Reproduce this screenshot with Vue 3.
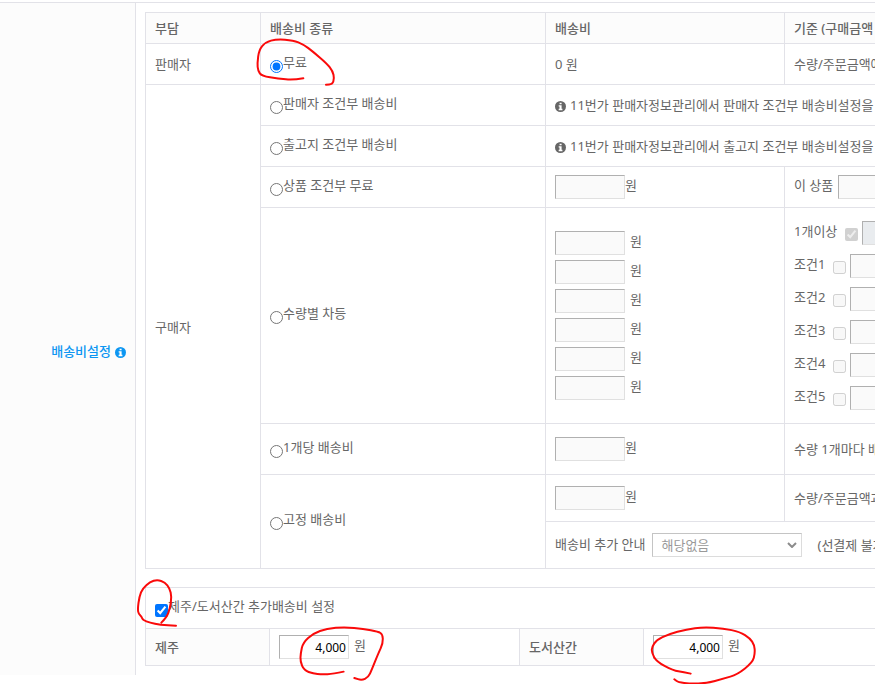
<script setup>
import { ref } from 'vue'

const feeType = ref('free')
const remoteEnabled = ref(true)
const jejuFee = ref('4,000')
const islandFee = ref('4,000')
const conditions = ['조건1', '조건2', '조건3', '조건4', '조건5']

// Hand-drawn marks, stored in a 3x grid from their own origin.
const marks = [
  { x: 250, y: 0, points: [[160, 235], [130, 240], [85, 236], [35, 228], [24, 212], [22, 190], [27, 150], [46, 127], [80, 117], [130, 121], [160, 133], [190, 156], [230, 190], [248, 213], [253, 236], [247, 253], [228, 254]] },
  { x: 100, y: 480, points: [[184, 428], [200, 412], [210, 385], [215, 350], [209, 325], [195, 307], [172, 299], [150, 306], [128, 325], [118, 350], [113, 388], [116, 402], [125, 410], [128, 420], [150, 428], [180, 435], [228, 437]] },
  { x: 100, y: 480, points: [[731, 575], [700, 582], [665, 583], [640, 581], [612, 571], [601, 545], [602, 520], [609, 488], [640, 460], [680, 446], [735, 441], [790, 447], [835, 455], [848, 463], [849, 490], [835, 520], [815, 570], [805, 592], [785, 601], [763, 594]] },
  { x: 540, y: 420, points: [[452, 761], [430, 756], [400, 752], [350, 725], [335, 698], [336, 680], [350, 660], [385, 643], [440, 628], [490, 621], [550, 625], [600, 636], [630, 655], [643, 675], [645, 700], [638, 727], [592, 764], [550, 776], [500, 790], [450, 791], [415, 787], [403, 778]] }
]

function smooth(points) {
  let d = `M${points[0].join(' ')}`
  for (let i = 1; i < points.length - 1; i++) {
    const [x, y] = points[i]
    const [nx, ny] = points[i + 1]
    d += ` Q${x} ${y} ${(x + nx) / 2} ${(y + ny) / 2}`
  }
  return `${d} L${points[points.length - 1].join(' ')}`
}
</script>

<template>
  <div class="page">
    <div class="row">
      <aside class="side">
        <a class="side-link" href="#shipping">배송비설정
          <svg class="info" viewBox="0 0 12 12" aria-hidden="true">
            <circle cx="6" cy="6" r="6" fill="currentColor" />
            <path d="M5 1.8h2.2v1.8H5zM4 4.7h3.2v3.8h.9V10H4V8.500h.9V6.100H4z" fill="#fff" />
          </svg>
        </a>
      </aside>

      <main id="shipping" class="content">
        <table class="grid fees">
          <colgroup>
            <col class="c-payer"><col class="c-type"><col class="c-fee"><col>
          </colgroup>
          <thead>
            <tr class="head">
              <th>부담</th>
              <th>배송비 종류</th>
              <th>배송비</th>
              <th>기준 (구매금액</th>
            </tr>
          </thead>
          <tbody>
            <tr class="line">
              <td>판매자</td>
              <td><label class="choice"><input v-model="feeType" type="radio" name="fee" value="free"><span>무료</span></label></td>
              <td>0 원</td>
              <td>수량/주문금액에</td>
            </tr>
            <tr class="line">
              <td rowspan="6">구매자</td>
              <td><label class="choice"><input v-model="feeType" type="radio" name="fee" value="seller"><span>판매자 조건부 배송비</span></label></td>
              <td colspan="2">
                <p class="note">
                  <svg class="info" viewBox="0 0 12 12" aria-hidden="true">
                    <circle cx="6" cy="6" r="6" fill="currentColor" />
                    <path d="M5 1.8h2.2v1.8H5zM4 4.7h3.2v3.8h.9V10H4V8.500h.9V6.100H4z" fill="#fff" />
                  </svg>
                  <span>11번가 판매자정보관리에서 판매자 조건부 배송비설정을</span>
                </p>
              </td>
            </tr>
            <tr class="line">
              <td><label class="choice"><input v-model="feeType" type="radio" name="fee" value="origin"><span>출고지 조건부 배송비</span></label></td>
              <td colspan="2">
                <p class="note">
                  <svg class="info" viewBox="0 0 12 12" aria-hidden="true">
                    <circle cx="6" cy="6" r="6" fill="currentColor" />
                    <path d="M5 1.8h2.2v1.8H5zM4 4.7h3.2v3.8h.9V10H4V8.500h.9V6.100H4z" fill="#fff" />
                  </svg>
                  <span>11번가 판매자정보관리에서 출고지 조건부 배송비설정을</span>
                </p>
              </td>
            </tr>
            <tr class="line">
              <td><label class="choice"><input v-model="feeType" type="radio" name="fee" value="product"><span>상품 조건부 무료</span></label></td>
              <td><label class="amount tight"><input class="box" type="text" disabled><span>원</span></label></td>
              <td><label class="amount"><span>이 상품</span><input class="box" type="text" disabled></label></td>
            </tr>
            <tr class="tiers">
              <td><label class="choice"><input v-model="feeType" type="radio" name="fee" value="tier"><span>수량별 차등</span></label></td>
              <td>
                <div class="tier-fees">
                  <label v-for="n in 6" :key="n" class="amount"><input class="box" type="text" disabled><span>원</span></label>
                </div>
              </td>
              <td>
                <div class="tier-rules">
                  <div class="rule">
                    <label class="rule-label"><span>1개이상</span><input type="checkbox" checked disabled></label>
                    <input class="box fixed" type="text" disabled>
                  </div>
                  <div v-for="c in conditions" :key="c" class="rule">
                    <label class="rule-label"><span>{{ c }}</span><input type="checkbox" disabled></label>
                    <input class="box" type="text" disabled>
                  </div>
                </div>
              </td>
            </tr>
            <tr class="unit">
              <td><label class="choice"><input v-model="feeType" type="radio" name="fee" value="unit"><span>1개당 배송비</span></label></td>
              <td><label class="amount tight"><input class="box" type="text" disabled><span>원</span></label></td>
              <td>수량 1개마다 배</td>
            </tr>
            <tr>
              <td>
                <label class="choice"><input v-model="feeType" type="radio" name="fee" value="flat"><span>고정 배송비</span></label>
              </td>
              <td colspan="2" class="nested">
                <div class="flat">
                  <div class="flat-fee"><label class="amount tight"><input class="box" type="text" disabled><span>원</span></label></div>
                  <div class="flat-rule">수량/주문금액과</div>
                </div>
                <div class="extra">
                  <label class="extra-label" for="extra-info">배송비 추가 안내</label>
                  <span class="select">
                    <select id="extra-info" disabled><option>해당없음</option></select>
                    <svg viewBox="0 0 10 6" aria-hidden="true"><path d="M1 1l4 4 4-4" fill="none" stroke="#8c8c8c" stroke-width="2" /></svg>
                  </span>
                  <span class="prepaid">(선결제 불가</span>
                </div>
              </td>
            </tr>
          </tbody>
        </table>

        <table class="grid remote">
          <colgroup>
            <col class="c-area"><col class="c-price"><col class="c-area"><col>
          </colgroup>
          <tbody>
            <tr class="line">
              <td colspan="4"><label class="choice"><input v-model="remoteEnabled" type="checkbox"><span>제주/도서산간 추가배송비 설정</span></label></td>
            </tr>
            <tr class="areas">
              <th><label for="jeju">제주</label></th>
              <td><div class="amount"><input id="jeju" v-model="jejuFee" class="box" type="text"><span>원</span></div></td>
              <th><label for="island">도서산간</label></th>
              <td><div class="amount"><input id="island" v-model="islandFee" class="box" type="text"><span>원</span></div></td>
            </tr>
          </tbody>
        </table>
      </main>
    </div>

    <svg class="marks" width="875" height="684" viewBox="0 0 875 684" aria-hidden="true">
      <g v-for="(m, i) in marks" :key="i" :transform="`translate(${m.x} ${m.y}) scale(0.3333)`">
        <path :d="smooth(m.points)" />
      </g>
    </svg>
  </div>
</template>

<style>
body {
  background: #fff;
  overflow: hidden;
}
</style>

<style scoped>
.page {
  position: relative;
  overflow: hidden;
  padding: 2px 0 9px;
  color: #666;
  font: 13px/20px "Noto Sans", "Noto Sans CJK KR", sans-serif;
}
.row {
  display: flex;
  border-top: 1px solid #e2e2e8;
}
.side {
  box-sizing: border-box;
  flex: 0 0 136px;
  padding: 338px 9px 0 0;
  border-right: 1px solid #e2e2e8;
  background: #fcfcfc;
}
.side-link {
  display: flex;
  align-items: center;
  justify-content: flex-end;
  gap: 4px;
  color: #0c96f2;
  font-weight: 500;
  text-decoration: none;
  white-space: nowrap;
}
.info {
  flex: none;
  width: 11px;
  height: 11px;
  margin-top: 3px;
}
.content {
  flex: 1;
  min-width: 0;
  padding: 9px 0 9px 9px;
}
.grid {
  width: calc(100% + 100px);
  border-collapse: collapse;
  table-layout: fixed;
}
.remote {
  margin-top: 18px;
}
.c-payer { width: 115px; }
.c-type { width: 285px; }
.c-fee { width: 239px; }
.c-area { width: 124px; }
.c-price { width: 250px; }
th,
td {
  padding: 0 9px;
  border: 1px solid #e2e2e8;
  text-align: left;
  vertical-align: middle;
  white-space: nowrap;
}
th {
  background: #fcfcfc;
  font-weight: 500;
}
.head th { height: 30px; }
.line td { height: 40px; }
.tiers td { height: 215px; }
.unit td { height: 50px; }
.areas th,
.areas td { height: 36px; }
.choice {
  display: flex;
  align-items: flex-start;
  padding-bottom: 3px;
  line-height: 18px;
}
.choice input {
  width: 13px;
  height: 13px;
  margin: 7px 0 0;
}
.note {
  display: flex;
  align-items: center;
  gap: 4px;
  margin: 0;
}
.amount {
  display: flex;
  align-items: flex-start;
  gap: 5px;
}
.tight { gap: 0; }
.box {
  box-sizing: border-box;
  flex: none;
  width: 70px;
  height: 24px;
  margin: 0;
  padding: 1px 2px;
  border: 1px solid;
  border-color: #b0b0b0 #e0e0e0 #e0e0e0 #b0b0b0;
  border-radius: 0;
  background: #fff;
  color: #000;
  font: 12px "Noto Sans", "Noto Sans CJK KR", sans-serif;
  text-align: right;
}
.box:disabled { background: #fafafa; }
.box.fixed:disabled { background: #e9ecef; }
.tier-fees {
  display: grid;
  gap: 5px;
}
.tier-rules {
  display: grid;
  gap: 9px;
}
.rule {
  display: flex;
  gap: 4px;
}
.rule-label {
  display: flex;
  align-items: flex-start;
  gap: 8px;
}
.rule-label input {
  width: 13px;
  height: 13px;
  margin: 7px 0 0;
}
.nested { padding: 0; }
.flat {
  display: flex;
  border-bottom: 1px solid #e2e2e8;
}
.flat-fee,
.flat-rule {
  box-sizing: border-box;
  display: flex;
  align-items: center;
  height: 46px;
  padding: 0 9px;
}
.flat-fee {
  flex: 0 0 239px;
  border-right: 1px solid #e2e2e8;
}
.extra {
  display: flex;
  align-items: center;
  height: 46px;
  padding: 0 9px;
}
.extra-label { padding-bottom: 3px; }
.select {
  position: relative;
  margin: 0 15px 0 7px;
}
.select select {
  display: block;
  box-sizing: border-box;
  width: 150px;
  height: 24px;
  padding: 0 8px;
  border: 1px solid #dcdcdc;
  border-top-color: #c4c4c4;
  border-left-color: #c4c4c4;
  border-radius: 0;
  background: #fff;
  color: #999;
  font: 13px "Noto Sans", "Noto Sans CJK KR", sans-serif;
  opacity: 1;
  appearance: none;
}
.select svg {
  position: absolute;
  top: 9px;
  right: 5px;
  width: 10px;
  height: 6px;
}
.marks {
  position: absolute;
  top: 0;
  left: 0;
  pointer-events: none;
}
.marks path {
  fill: none;
  stroke: #fa0a0a;
  stroke-width: 6;
  stroke-linecap: round;
  stroke-linejoin: round;
}
</style>
